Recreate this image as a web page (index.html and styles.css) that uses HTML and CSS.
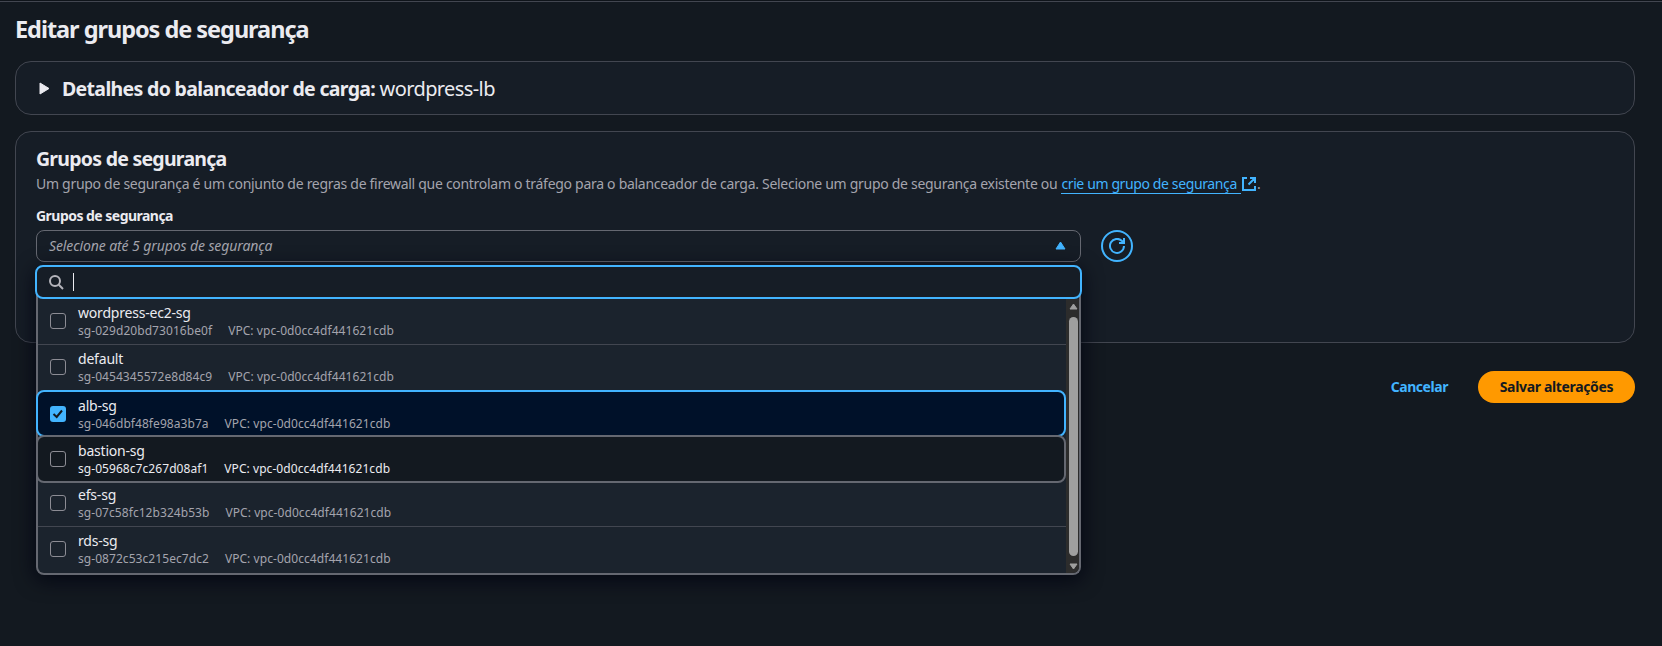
FILE: index.html
```html
<!DOCTYPE html>
<html lang="pt-BR">
<head>
<meta charset="utf-8">
<title>Editar grupos de segurança</title>
<link rel="stylesheet" href="styles.css">
</head>
<body>
<main class="page">
  <h1 class="title">Editar grupos de segurança</h1>

  <section class="card details">
    <svg class="caret" width="11" height="13" viewBox="0 0 11 13"><path d="M1 1v11l9-5.500z" fill="#ebebf0" stroke="#ebebf0" stroke-linejoin="round"/></svg>
    <h2 class="heading">Detalhes do balanceador de carga: <span class="lb">wordpress-lb</span></h2>
  </section>

  <section class="card groups">
    <h2 class="heading groups-heading">Grupos de segurança</h2>
    <p class="desc"><span>Um grupo de segurança é um conjunto de regras de firewall que controlam o tráfego para o balanceador de carga. Selecione um grupo de segurança existente ou</span> <a class="link">crie um grupo de segurança</a><svg class="ext" width="14" height="14" viewBox="0 0 14 14" fill="none" stroke="#42b4ff" stroke-width="2"><path d="M5 1H1v12h12V9M8 1h5v5M13 1L6.500 7.500"/></svg><span class="stop">.</span></p>
    <label class="label">Grupos de segurança</label>
    <div class="field">
      <div class="select-wrap">
        <div class="select">
          <span class="placeholder">Selecione até 5 grupos de segurança</span>
          <svg width="11" height="9" viewBox="0 0 11 9"><path d="M5.500 1L10 8H1z" fill="#42b4ff" stroke="#42b4ff" stroke-linejoin="round"/></svg>
        </div>
        <div class="dropdown">
          <div class="search">
            <svg width="16" height="16" viewBox="0 0 16 16" fill="none" stroke="#b4b4bb" stroke-width="2"><circle cx="7" cy="7" r="5"/><path d="M10.800 10.800L15 15"/></svg>
            <span class="cursor"></span>
          </div>
          <div class="list">
            <ul class="options">
              <li class="option first"><span class="check"></span><div class="text"><div class="name">wordpress-ec2-sg</div><div class="meta"><span>sg-029d20bd73016be0f</span><span>VPC: vpc-0d0cc4df441621cdb</span></div></div></li>
              <li class="option second"><span class="check"></span><div class="text"><div class="name">default</div><div class="meta"><span>sg-0454345572e8d84c9</span><span>VPC: vpc-0d0cc4df441621cdb</span></div></div></li>
              <li class="option selected"><span class="check checked"><svg width="16" height="16" viewBox="0 0 16 16" fill="none" stroke="#131920" stroke-width="2"><path d="M3.500 8l3.200 3L12 4.500"/></svg></span><div class="text"><div class="name">alb-sg</div><div class="meta"><span>sg-046dbf48fe98a3b7a</span><span>VPC: vpc-0d0cc4df441621cdb</span></div></div></li>
              <li class="option hovered"><span class="check"></span><div class="text"><div class="name">bastion-sg</div><div class="meta"><span>sg-05968c7c267d08af1</span><span>VPC: vpc-0d0cc4df441621cdb</span></div></div></li>
              <li class="option fifth"><span class="check"></span><div class="text"><div class="name">efs-sg</div><div class="meta"><span>sg-07c58fc12b324b53b</span><span>VPC: vpc-0d0cc4df441621cdb</span></div></div></li>
              <li class="option last"><span class="check"></span><div class="text"><div class="name">rds-sg</div><div class="meta"><span>sg-0872c53c215ec7dc2</span><span>VPC: vpc-0d0cc4df441621cdb</span></div></div></li>
            </ul>
            <div class="scrollbar">
              <svg width="9" height="7" viewBox="0 0 9 7"><path d="M4.500 1L8 6H1z" fill="#9f9f9f" stroke="#9f9f9f" stroke-linejoin="round"/></svg>
              <span class="thumb"></span>
              <svg width="9" height="7" viewBox="0 0 9 7"><path d="M1 1h7L4.500 6z" fill="#9f9f9f" stroke="#9f9f9f" stroke-linejoin="round"/></svg>
            </div>
          </div>
        </div>
      </div>
      <button class="refresh"><svg width="16" height="16" viewBox="0 0 16 16" fill="none" stroke="#42b4ff" stroke-width="2"><path d="M15 8a7 7 0 1 1-2-5l1.500 2M15 0v5h-5"/></svg></button>
    </div>
  </section>

  <div class="actions">
    <a class="cancel">Cancelar</a>
    <button class="save">Salvar alterações</button>
  </div>
</main>
</body>
</html>
```

FILE: styles.css
```css
* { box-sizing: border-box; }
body {
  margin: 0;
  background: #131920;
  color: #ebebf0;
  font: 14px/20px "Noto Sans", "Open Sans", sans-serif;
  border-top: 1px solid #0f141a;
  height: 646px;
  overflow: hidden;
}
h1, h2, p, ul { margin: 0; padding: 0; }
ul { list-style: none; }
svg { display: block; flex: none; }
.page { border-top: 1px solid #424650; padding: 12px 27px 0 15px; }
.title { font-size: 23.5px; line-height: 30px; font-weight: 700; height: 47px; white-space: nowrap; letter-spacing: -1.04px; }
.card { background: #161d26; border: 1px solid #424650; border-radius: 16px; }
.details { height: 54px; display: flex; align-items: center; padding-left: 23px; gap: 12px; }
.details .heading { padding-top: 2px; }
.heading { font-size: 19.5px; line-height: 24px; font-weight: 700; white-space: nowrap; letter-spacing: -0.67px; }
.lb { font-size: 20px; font-weight: 400; letter-spacing: -0.6px; }
.groups { margin-top: 16px; height: 212px; padding: 15px 20px 0; }
.groups-heading { letter-spacing: -0.75px; }
.desc { color: #a4a4ad; white-space: nowrap; display: flex; height: 32px; padding-top: 2px; line-height: 22px; gap: 4px; letter-spacing: -0.29px; }
.link { color: #42b4ff; border-bottom: 1px solid #42b4ff; height: 21px; padding-right: 4px; letter-spacing: -0.38px; }
.ext { margin: 4px 0 0 -3px; }
.stop { margin-left: -3px; }
.label { display: block; font-weight: 700; height: 27px; padding-top: 2px; line-height: 22px; letter-spacing: -0.53px; }
.field { display: flex; gap: 20px; }
.select-wrap { width: 1045px; position: relative; }
.select { height: 32px; border: 1px solid #656871; border-radius: 8px; display: flex; align-items: center; justify-content: space-between; padding: 0 14px 1px 12px; }
.placeholder { font-style: italic; color: #a4a4ad; letter-spacing: -0.1px; }
.dropdown { position: absolute; z-index: 2; left: 0; top: 36px; width: 1045px; height: 309px; background: #1b232d; border: 2px solid #656871; border-top: 0; border-radius: 8px; box-shadow: 0 4px 20px 1px rgba(0, 4, 16, 0.85); }
.search { height: 34px; margin: -1px -3px 0; border: 2px solid #42b4ff; border-radius: 8px; background: #161d26; display: flex; align-items: center; padding-left: 11px; gap: 9px; }
.cursor { width: 1px; height: 18px; background: #ebebf0; }
.list { display: flex; height: 274px; }
.options { flex: 1; }
.scrollbar { width: 13px; background: #2c2c2c; display: flex; flex-direction: column; align-items: flex-start; padding: 4px 0 3px 3px; gap: 7px; border-radius: 0 0 6px 0; }
.thumb { width: 9px; flex: 1; border-radius: 5px; background: #9f9f9f; }
.option { display: flex; gap: 12px; padding: 5px 12px 0; height: 46px; }
.first, .fifth { border-bottom: 1px solid #424650; }
.second { height: 45px; }
.check { width: 16px; height: 16px; flex: none; border: 1px solid #8c8c94; border-radius: 3px; margin-top: 9px; }
.checked { background: #42b4ff; border: 0; }
.name { line-height: 18px; letter-spacing: -0.2px; }
.meta { display: flex; gap: 16px; margin-top: 1px; font-size: 12px; line-height: 16px; color: #a4a4ad; letter-spacing: 0.06px; }
.selected { height: 47px; margin-left: -2px; background: #001129; border: 2px solid #42b4ff; border-radius: 8px; }
.hovered { height: 48px; margin: -2px 0 -2px -2px; position: relative; z-index: 1; background: #131920; border: 2px solid #656871; border-radius: 8px; }
.hovered .meta { color: #ebebf0; }
.refresh { width: 32px; height: 32px; border: 2px solid #42b4ff; border-radius: 50%; background: none; padding: 0; display: grid; place-items: center; }
.actions { display: flex; justify-content: flex-end; align-items: center; gap: 30px; margin-top: 28px; height: 32px; font-weight: 700; }
.cancel { color: #42b4ff; letter-spacing: -0.45px; }
.save { width: 157px; height: 32px; border: 0; border-radius: 16px; background: #ff9900; color: #131920; font: inherit; padding: 0; letter-spacing: -0.34px; }
```
